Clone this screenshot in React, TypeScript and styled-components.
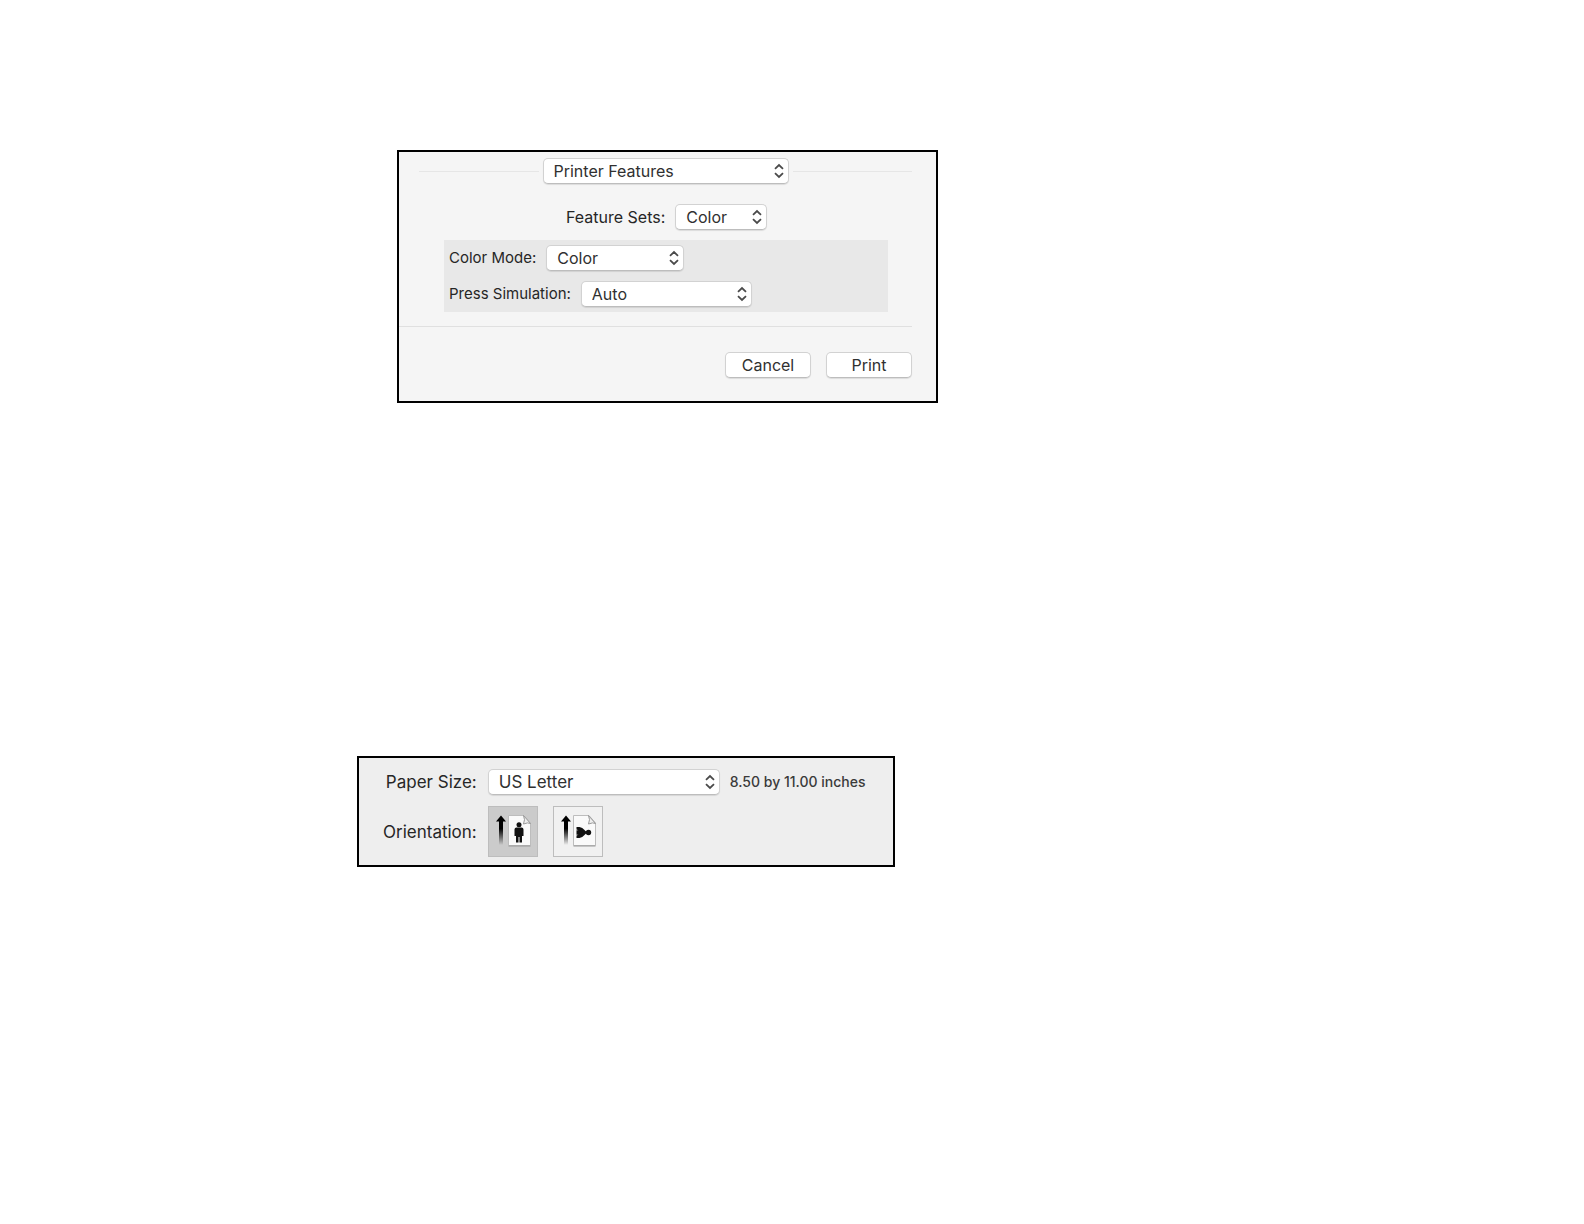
import React, { useState } from "react";
import styled, { createGlobalStyle } from "styled-components";

const GlobalStyle = createGlobalStyle`
  *, *::before, *::after { box-sizing: border-box; }
  body {
    margin: 0;
    background: #fff;
    color: #262626;
    font-family: Inter, "Liberation Sans", sans-serif;
    font-size: 16px;
    line-height: 20px;
  }
`;

const Page = styled.main`
  display: flex;
  flex-direction: column;
  align-items: flex-start;
  gap: 353px;
  padding: 150px 0 0 357px;
`;

const Panel = styled.form<{ $tone: string }>`
  border: 2px solid #000;
  background: ${(p) => p.$tone};
`;

const PrintPanel = styled(Panel)`
  width: 541px;
  margin-left: 40px;
  padding: 6px 24px 23px 0;
`;

const PaperPanel = styled(Panel)`
  display: grid;
  grid-template-columns: auto 1fr;
  align-items: center;
  gap: 11px;
  width: 538px;
  padding: 11px 20px 8px 24px;
  font-size: 17px;
`;

const TitleRow = styled.div`
  display: flex;
  align-items: center;
  gap: 4px;
  padding-left: 20px;
`;

const Rule = styled.hr`
  flex: 1;
  height: 1px;
  margin: 0;
  border: 0;
  background: #e6e6e6;
`;

const Footer = styled.div`
  display: flex;
  justify-content: flex-end;
  gap: 15px;
  margin-top: 14px;
  padding-top: 25px;
  border-top: 1px solid #e0e0e0;
`;

const Field = styled.div`
  display: flex;
  align-items: center;
  gap: 10px;
`;

const SetsField = styled(Field)`
  margin-top: 20px;
  padding-left: 167px;
`;

const Options = styled.div`
  display: flex;
  flex-direction: column;
  gap: 10px;
  margin: 10px 24px 0 45px;
  padding: 5px;
  background: #e8e8e8;
`;

const Label = styled.label`
  text-align: right;
  white-space: nowrap;
`;

const SmallLabel = styled(Label)`
  font-size: 15px;
`;

const PopupBox = styled.div<{ $width: number }>`
  position: relative;
  width: ${(p) => p.$width}px;
`;

const Popup = styled.select`
  appearance: none;
  display: block;
  width: 100%;
  height: 26px;
  margin: 0;
  padding: 0 24px 0 10px;
  border: 1px solid #d2d2d2;
  border-bottom-color: #bdbdbd;
  border-radius: 5px;
  background: #fff;
  box-shadow: 0 1px 1px #0000001a;
  color: #303030;
  font: inherit;
`;

const Arrows = styled.svg`
  position: absolute;
  top: 5px;
  right: 5px;
  width: 10px;
  height: 16px;
  pointer-events: none;
`;

const PushButton = styled.button`
  width: 86px;
  height: 26px;
  padding: 0;
  border: 1px solid #d2d2d2;
  border-bottom-color: #bdbdbd;
  border-radius: 5px;
  background: #fff;
  box-shadow: 0 1px 1px #0000001a;
  color: #303030;
  font: inherit;
`;

const Note = styled.span`
  color: #3a3a3a;
  font-size: 14px;
  font-weight: 500;
  white-space: nowrap;
`;

const OrientationGroup = styled.div`
  display: flex;
  gap: 15px;
`;

const OrientationButton = styled.button`
  display: grid;
  place-items: center;
  width: 50px;
  height: 51px;
  padding: 0;
  border: 1px solid #bdbdbd;
  background: #f1f1f1;

  &[aria-pressed="true"] {
    background: #cbcbcb;
  }
`;

type SelectProps = { id: string; width: number; options: string[]; name?: string };

function PopupSelect({ id, width, options, name }: SelectProps) {
  return (
    <PopupBox $width={width}>
      <Popup id={id} aria-label={name} defaultValue={options[0]}>
        {options.map((o) => (
          <option key={o}>{o}</option>
        ))}
      </Popup>
      <Arrows viewBox="0 0 10 16" fill="none" stroke="#4a4a4a" strokeWidth="1.8" aria-hidden="true">
        <path d="M1 5.8 5 2l4 3.8M1 10.2 5 14l4-3.8" />
      </Arrows>
    </PopupBox>
  );
}

function OrientationIcon({ landscape }: { landscape?: boolean }) {
  const fade = landscape ? "fade-landscape" : "fade-portrait";
  return (
    <svg width="48" height="49" viewBox="0 0 48 49" aria-hidden="true">
      <defs>
        <linearGradient id={fade} x1="0" y1="0" x2="0" y2="1">
          <stop offset="0.35" stopColor="#000" />
          <stop offset="1" stopColor="#000" stopOpacity="0" />
        </linearGradient>
      </defs>
      <path d="M10 13H14V38H10Z" fill={`url(#${fade})`} />
      <path d="M7 14.500 12 8.500l5 6Z" fill="#000" />
      <path d="M19.500 8.500H35L41.500 16V38.500H19.500Z" fill="#fafafa" stroke="#bdbdbd" />
      <path d="M19.500 39H41.500" stroke="#999" />
      <path d="M34.500 8.500Q36.500 12.500 34.500 17 39 15 41.500 16.500Z" fill="#eee" stroke="#999" />
      {landscape ? (
        <g fill="#111">
          <circle cx="34.500" cy="25.500" r="2.700" />
          <path d="M22.500 20h3q3 .5 5 3l1.500 1.500v2L30.500 28q-2 2.500-5 3h-3v-2.500l2-.8h-2v-4.400h2l-2-.8Z" />
          <path d="M31 24.700h3v1.600h-3Z" />
        </g>
      ) : (
        <g fill="#111">
          <circle cx="30" cy="17.800" r="2.500" />
          <path d="M27.500 20.500h5q2 0 2 2V29h-1.500v6.500h-2.500V30h-1v5.500H27V29h-1.500v-6.500q0-2 2-2Z" />
        </g>
      )}
    </svg>
  );
}

export default function App() {
  const [landscape, setLandscape] = useState(false);

  return (
    <>
      <GlobalStyle />
      <Page>
        <PrintPanel $tone="#f5f5f5" aria-label="Print" onSubmit={(e) => e.preventDefault()}>
          <TitleRow>
            <Rule />
            <PopupSelect
              id="options-group"
              name="Options group"
              width={246}
              options={["Printer Features"]}
            />
            <Rule />
          </TitleRow>
          <SetsField>
            <Label htmlFor="feature-sets">Feature Sets:</Label>
            <PopupSelect id="feature-sets" width={92} options={["Color"]} />
          </SetsField>
          <Options>
            <Field>
              <SmallLabel htmlFor="color-mode">Color Mode:</SmallLabel>
              <PopupSelect id="color-mode" width={138} options={["Color"]} />
            </Field>
            <Field>
              <SmallLabel htmlFor="press-simulation">Press Simulation:</SmallLabel>
              <PopupSelect id="press-simulation" width={171} options={["Auto"]} />
            </Field>
          </Options>
          <Footer>
            <PushButton type="button">Cancel</PushButton>
            <PushButton type="submit">Print</PushButton>
          </Footer>
        </PrintPanel>

        <PaperPanel $tone="#eeeeee" aria-label="Paper" onSubmit={(e) => e.preventDefault()}>
          <Label htmlFor="paper-size">Paper Size:</Label>
          <Field>
            <PopupSelect id="paper-size" width={232} options={["US Letter"]} />
            <Note>8.50 by 11.00 inches</Note>
          </Field>
          <Label as="span" id="orientation-label">Orientation:</Label>
          <OrientationGroup role="group" aria-labelledby="orientation-label">
            <OrientationButton
              type="button"
              aria-label="Portrait"
              aria-pressed={!landscape}
              onClick={() => setLandscape(false)}
            >
              <OrientationIcon />
            </OrientationButton>
            <OrientationButton
              type="button"
              aria-label="Landscape"
              aria-pressed={landscape}
              onClick={() => setLandscape(true)}
            >
              <OrientationIcon landscape />
            </OrientationButton>
          </OrientationGroup>
        </PaperPanel>
      </Page>
    </>
  );
}
